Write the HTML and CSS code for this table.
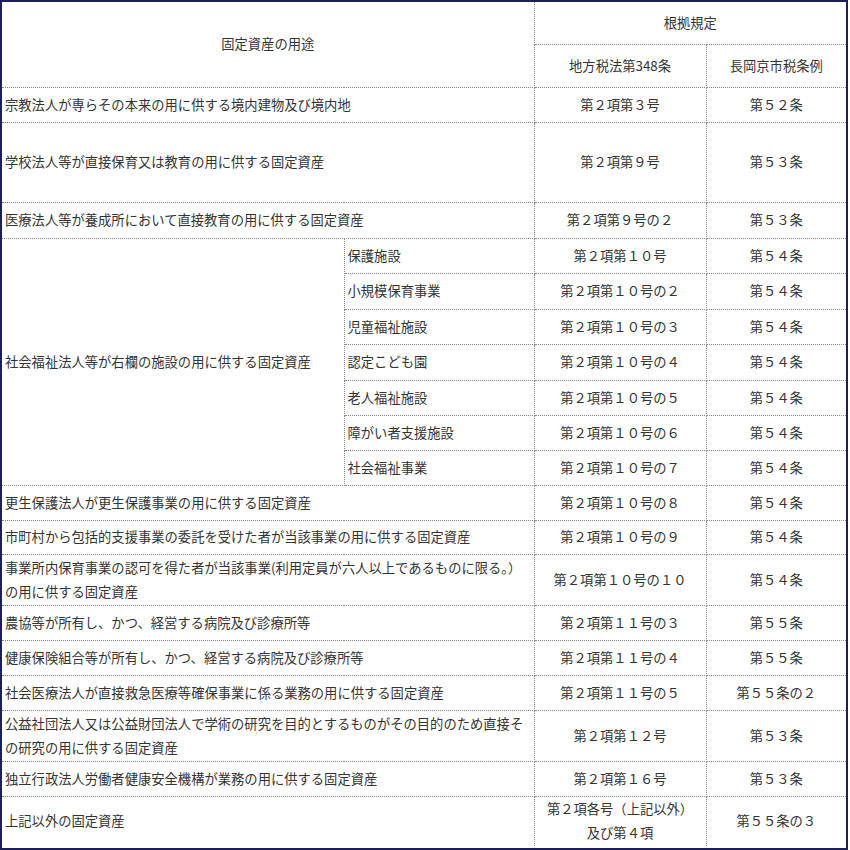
FILE: index.html
```html
<!DOCTYPE html>
<html lang="ja">
<head>
<meta charset="utf-8">
<title>固定資産の用途</title>
<link rel="stylesheet" href="styles.css">
</head>
<body>
<div class="frame">
<table class="tbl">
  <colgroup>
    <col class="c-a"><col class="c-b"><col class="c-c"><col class="c-d">
  </colgroup>
  <tr class="h1">
    <th colspan="2" rowspan="2" class="hd">固定資産の用途</th>
    <th colspan="2" class="hd">根拠規定</th>
  </tr>
  <tr class="h2">
    <th class="hd">地方税法第348条</th>
    <th class="hd">長岡京市税条例</th>
  </tr>
  <tr class="r35">
    <td colspan="2" class="use">宗教法人が専らその本来の用に供する境内建物及び境内地</td>
    <td class="code">第２項第３号</td><td class="code">第５２条</td>
  </tr>
  <tr class="r80">
    <td colspan="2" class="use">学校法人等が直接保育又は教育の用に供する固定資産</td>
    <td class="code">第２項第９号</td><td class="code">第５３条</td>
  </tr>
  <tr class="r36">
    <td colspan="2" class="use">医療法人等が養成所において直接教育の用に供する固定資産</td>
    <td class="code">第２項第９号の２</td><td class="code">第５３条</td>
  </tr>
  <tr class="r35">
    <td rowspan="7" class="use">社会福祉法人等が右欄の施設の用に供する固定資産</td>
    <td class="sub">保護施設</td>
    <td class="code">第２項第１０号</td><td class="code">第５４条</td>
  </tr>
  <tr class="r36">
    <td class="sub">小規模保育事業</td>
    <td class="code">第２項第１０号の２</td><td class="code">第５４条</td>
  </tr>
  <tr class="r35">
    <td class="sub">児童福祉施設</td>
    <td class="code">第２項第１０号の３</td><td class="code">第５４条</td>
  </tr>
  <tr class="r36">
    <td class="sub">認定こども園</td>
    <td class="code">第２項第１０号の４</td><td class="code">第５４条</td>
  </tr>
  <tr class="r35">
    <td class="sub">老人福祉施設</td>
    <td class="code">第２項第１０号の５</td><td class="code">第５４条</td>
  </tr>
  <tr class="r35">
    <td class="sub">障がい者支援施設</td>
    <td class="code">第２項第１０号の６</td><td class="code">第５４条</td>
  </tr>
  <tr class="r35">
    <td class="sub">社会福祉事業</td>
    <td class="code">第２項第１０号の７</td><td class="code">第５４条</td>
  </tr>
  <tr class="r35">
    <td colspan="2" class="use">更生保護法人が更生保護事業の用に供する固定資産</td>
    <td class="code">第２項第１０号の８</td><td class="code">第５４条</td>
  </tr>
  <tr class="r34">
    <td colspan="2" class="use">市町村から包括的支援事業の委託を受けた者が当該事業の用に供する固定資産</td>
    <td class="code">第２項第１０号の９</td><td class="code">第５４条</td>
  </tr>
  <tr class="r51">
    <td colspan="2" class="use">事業所内保育事業の認可を得た者が当該事業(利用定員が六人以上であるものに限る。）<br>の用に供する固定資産</td>
    <td class="code">第２項第１０号の１０</td><td class="code">第５４条</td>
  </tr>
  <tr class="r35">
    <td colspan="2" class="use">農協等が所有し、かつ、経営する病院及び診療所等</td>
    <td class="code">第２項第１１号の３</td><td class="code">第５５条</td>
  </tr>
  <tr class="r35">
    <td colspan="2" class="use">健康保険組合等が所有し、かつ、経営する病院及び診療所等</td>
    <td class="code">第２項第１１号の４</td><td class="code">第５５条</td>
  </tr>
  <tr class="r35">
    <td colspan="2" class="use">社会医療法人が直接救急医療等確保事業に係る業務の用に供する固定資産</td>
    <td class="code">第２項第１１号の５</td><td class="code">第５５条の２</td>
  </tr>
  <tr class="r51">
    <td colspan="2" class="use">公益社団法人又は公益財団法人で学術の研究を目的とするものがその目的のため直接そ<br>の研究の用に供する固定資産</td>
    <td class="code">第２項第１２号</td><td class="code">第５３条</td>
  </tr>
  <tr class="r35">
    <td colspan="2" class="use">独立行政法人労働者健康安全機構が業務の用に供する固定資産</td>
    <td class="code">第２項第１６号</td><td class="code">第５３条</td>
  </tr>
  <tr class="r50">
    <td colspan="2" class="use">上記以外の固定資産</td>
    <td class="code">第２項各号（上記以外）<br>及び第４項</td><td class="code">第５５条の３</td>
  </tr>
</table>
</div>
</body>
</html>
```

FILE: styles.css
```css
html, body {
  margin: 0;
  padding: 0;
  background: #ffffff;
}

.frame {
  width: 844px;
  height: 846px;
  border: 2px solid #1c1f5c;
  overflow: hidden;
}

.tbl {
  width: 844px;
  table-layout: fixed;
  border-collapse: collapse;
  font-family: "Noto Sans CJK JP", "Noto Sans", sans-serif;
  font-size: 13.3px;
  line-height: 24px;
  color: #333333;
}

.c-a { width: 342px; }
.c-b { width: 190px; }
.c-c { width: 172px; }
.c-d { width: 140px; }

.tbl th,
.tbl td {
  border: 1px dotted #8a8a8a;
  padding: 0 3px;
  vertical-align: middle;
  white-space: nowrap;
  overflow: hidden;
}

.tbl tr:first-child th { border-top: none; }
.tbl th:first-child,
.tbl tr td:first-child { border-left: none; }
.tbl tr:last-child td { border-bottom: none; }
.tbl tr > :last-child { border-right: none; }

.hd {
  font-weight: normal;
  text-align: center;
}

.use { text-align: left; }
.sub { text-align: left; }
.code { text-align: center; }

.h1 { height: 42px; }
.h2 { height: 43px; }
.r34 { height: 34px; }
.r35 { height: 35px; }
.r36 { height: 36px; }
.r50 { height: 50px; }
.r51 { height: 51px; }
.r80 { height: 80px; }
```
